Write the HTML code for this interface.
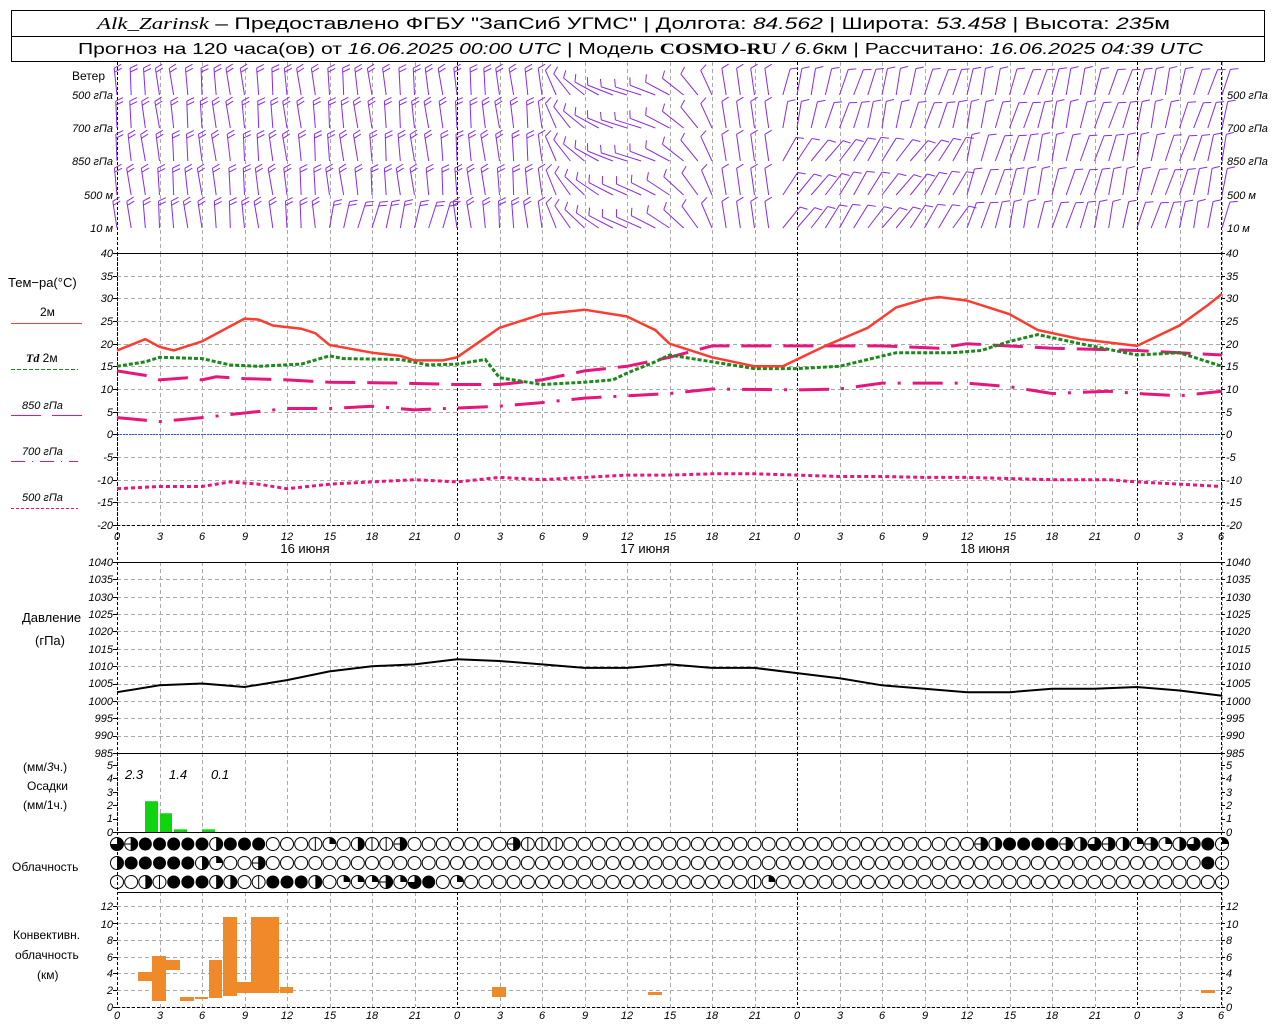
<!DOCTYPE html>
<html><head><meta charset="utf-8"><style>
html,body{margin:0;padding:0;background:#fff;width:1280px;height:1024px;overflow:hidden}
svg{display:block}
text{font-family:"Liberation Sans",sans-serif;fill:#000}
.it{font-style:italic;font-size:11px}
.l{font-size:12px}
</style></head><body>
<svg id="s" width="1280" height="1024" viewBox="0 0 1280 1024" xmlns="http://www.w3.org/2000/svg">
<rect x="11.5" y="10.5" width="1253" height="51" fill="none" stroke="#000"/>
<line x1="11" y1="36.5" x2="1265" y2="36.5" stroke="#000"/>
<text x="97" y="29" font-size="17" textLength="1073" lengthAdjust="spacingAndGlyphs"><tspan font-family="Liberation Serif" font-style="italic">Alk_Zarinsk</tspan> – Предоставлено ФГБУ "ЗапСиб УГМС" | Долгота: <tspan font-style="italic">84.562</tspan> | Широта: <tspan font-style="italic">53.458</tspan> | Высота: <tspan font-style="italic">235</tspan>м</text>
<text x="78" y="54" font-size="16" textLength="1125" lengthAdjust="spacingAndGlyphs">Прогноз на 120 часа(ов) от <tspan font-style="italic">16.06.2025 00:00 UTC</tspan>  | Модель <tspan font-family="Liberation Serif" font-weight="bold">COSMO-RU</tspan> <tspan font-style="italic">/ 6.6</tspan>км | Рассчитано: <tspan font-style="italic">16.06.2025 04:39 UTC</tspan></text>
<g id="grid"></g>
<g id="data"></g>
<text x="72" y="80" class="l">Ветер</text>
<text x="113" y="99" class="it" text-anchor="end">500 гПа</text>
<text x="113" y="132" class="it" text-anchor="end">700 гПа</text>
<text x="113" y="165" class="it" text-anchor="end">850 гПа</text>
<text x="113" y="199" class="it" text-anchor="end">500 м</text>
<text x="113" y="232" class="it" text-anchor="end">10  м</text>
<text x="1227" y="99" class="it">500 гПа</text>
<text x="1227" y="132" class="it">700 гПа</text>
<text x="1227" y="165" class="it">850 гПа</text>
<text x="1227" y="199" class="it">500 м</text>
<text x="1227" y="232" class="it">10  м</text>
<text x="8" y="287" font-size="13">Тем−ра(°C)</text>
<text x="40" y="316" class="l">2м</text>
<line x1="11" y1="323.5" x2="82" y2="323.5" stroke="#ff3b30"/>
<text x="26" y="362" class="l"><tspan font-family="Liberation Serif" font-style="italic" font-weight="bold">Td</tspan>  2м</text>
<line x1="11" y1="369.5" x2="78" y2="369.5" stroke="#1a8a1a" stroke-dasharray="4 2"/>
<text x="22" y="409" class="it">850 гПа</text>
<line x1="11" y1="415.5" x2="41" y2="415.5" stroke="#e8157d"/><line x1="52" y1="415.5" x2="82" y2="415.5" stroke="#e8157d"/>
<text x="22" y="455" class="it">700 гПа</text>
<line x1="11" y1="461.5" x2="78" y2="461.5" stroke="#e8157d" stroke-dasharray="14 7 1 7"/>
<text x="22" y="501" class="it">500 гПа</text>
<line x1="11" y1="508.5" x2="78" y2="508.5" stroke="#e8157d" stroke-dasharray="3 2"/>
<text x="22" y="622" font-size="13">Давление</text>
<text x="35" y="645" font-size="13">(гПа)</text>
<text x="23" y="771" class="l">(мм/<tspan font-style="italic">3</tspan>ч.)</text>
<text x="27" y="790" class="l">Осадки</text>
<text x="23" y="809" class="l">(мм/1ч.)</text>
<text x="125" y="779" font-size="13" font-style="italic">2.3</text>
<text x="169" y="779" font-size="13" font-style="italic">1.4</text>
<text x="211" y="779" font-size="13" font-style="italic">0.1</text>
<text x="12" y="871" class="l">Облачность</text>
<text x="13" y="939" class="l">Конвективн.</text>
<text x="15" y="959" class="l">облачность</text>
<text x="37" y="979" class="l">(км)</text>
<text x="305" y="553" font-size="13" text-anchor="middle">16 июня</text>
<text x="645" y="553" font-size="13" text-anchor="middle">17 июня</text>
<text x="985" y="553" font-size="13" text-anchor="middle">18 июня</text>
<g class="it" font-size="14">
<text x="117" y="540" text-anchor="middle">0</text><text x="160" y="540" text-anchor="middle">3</text><text x="202" y="540" text-anchor="middle">6</text><text x="245" y="540" text-anchor="middle">9</text><text x="287" y="540" text-anchor="middle">12</text><text x="330" y="540" text-anchor="middle">15</text><text x="372" y="540" text-anchor="middle">18</text><text x="415" y="540" text-anchor="middle">21</text><text x="457" y="540" text-anchor="middle">0</text><text x="500" y="540" text-anchor="middle">3</text><text x="542" y="540" text-anchor="middle">6</text><text x="585" y="540" text-anchor="middle">9</text><text x="627" y="540" text-anchor="middle">12</text><text x="670" y="540" text-anchor="middle">15</text><text x="712" y="540" text-anchor="middle">18</text><text x="755" y="540" text-anchor="middle">21</text><text x="797" y="540" text-anchor="middle">0</text><text x="840" y="540" text-anchor="middle">3</text><text x="882" y="540" text-anchor="middle">6</text><text x="925" y="540" text-anchor="middle">9</text><text x="967" y="540" text-anchor="middle">12</text><text x="1010" y="540" text-anchor="middle">15</text><text x="1052" y="540" text-anchor="middle">18</text><text x="1095" y="540" text-anchor="middle">21</text><text x="1137" y="540" text-anchor="middle">0</text><text x="1180" y="540" text-anchor="middle">3</text><text x="1221" y="540" text-anchor="middle">6</text>
</g>
<g class="it" font-size="14">
<text x="117" y="1019" text-anchor="middle">0</text><text x="160" y="1019" text-anchor="middle">3</text><text x="202" y="1019" text-anchor="middle">6</text><text x="245" y="1019" text-anchor="middle">9</text><text x="287" y="1019" text-anchor="middle">12</text><text x="330" y="1019" text-anchor="middle">15</text><text x="372" y="1019" text-anchor="middle">18</text><text x="415" y="1019" text-anchor="middle">21</text><text x="457" y="1019" text-anchor="middle">0</text><text x="500" y="1019" text-anchor="middle">3</text><text x="542" y="1019" text-anchor="middle">6</text><text x="585" y="1019" text-anchor="middle">9</text><text x="627" y="1019" text-anchor="middle">12</text><text x="670" y="1019" text-anchor="middle">15</text><text x="712" y="1019" text-anchor="middle">18</text><text x="755" y="1019" text-anchor="middle">21</text><text x="797" y="1019" text-anchor="middle">0</text><text x="840" y="1019" text-anchor="middle">3</text><text x="882" y="1019" text-anchor="middle">6</text><text x="925" y="1019" text-anchor="middle">9</text><text x="967" y="1019" text-anchor="middle">12</text><text x="1010" y="1019" text-anchor="middle">15</text><text x="1052" y="1019" text-anchor="middle">18</text><text x="1095" y="1019" text-anchor="middle">21</text><text x="1137" y="1019" text-anchor="middle">0</text><text x="1180" y="1019" text-anchor="middle">3</text><text x="1221" y="1019" text-anchor="middle">6</text>
</g>
<g class="it" font-size="9">
<text x="113" y="257" text-anchor="end">40</text><text x="113" y="280" text-anchor="end">35</text><text x="113" y="302" text-anchor="end">30</text><text x="113" y="325" text-anchor="end">25</text><text x="113" y="348" text-anchor="end">20</text><text x="113" y="370" text-anchor="end">15</text><text x="113" y="393" text-anchor="end">10</text><text x="113" y="416" text-anchor="end">5</text><text x="113" y="438" text-anchor="end">0</text><text x="113" y="461" text-anchor="end">-5</text><text x="113" y="484" text-anchor="end">-10</text><text x="113" y="506" text-anchor="end">-15</text><text x="113" y="529" text-anchor="end">-20</text>
<text x="1226" y="257">40</text><text x="1226" y="280">35</text><text x="1226" y="302">30</text><text x="1226" y="325">25</text><text x="1226" y="348">20</text><text x="1226" y="370">15</text><text x="1226" y="393">10</text><text x="1226" y="416">5</text><text x="1226" y="438">0</text><text x="1226" y="461">-5</text><text x="1226" y="484">-10</text><text x="1226" y="506">-15</text><text x="1226" y="529">-20</text>
<text x="113" y="566" text-anchor="end">1040</text><text x="113" y="583" text-anchor="end">1035</text><text x="113" y="601" text-anchor="end">1030</text><text x="113" y="618" text-anchor="end">1025</text><text x="113" y="635" text-anchor="end">1020</text><text x="113" y="653" text-anchor="end">1015</text><text x="113" y="670" text-anchor="end">1010</text><text x="113" y="687" text-anchor="end">1005</text><text x="113" y="705" text-anchor="end">1000</text><text x="113" y="722" text-anchor="end">995</text><text x="113" y="739" text-anchor="end">990</text><text x="113" y="757" text-anchor="end">985</text>
<text x="1226" y="566">1040</text><text x="1226" y="583">1035</text><text x="1226" y="601">1030</text><text x="1226" y="618">1025</text><text x="1226" y="635">1020</text><text x="1226" y="653">1015</text><text x="1226" y="670">1010</text><text x="1226" y="687">1005</text><text x="1226" y="705">1000</text><text x="1226" y="722">995</text><text x="1226" y="739">990</text><text x="1226" y="757">985</text>
<text x="113" y="769" text-anchor="end">5</text><text x="113" y="782" text-anchor="end">4</text><text x="113" y="796" text-anchor="end">3</text><text x="113" y="809" text-anchor="end">2</text><text x="113" y="822" text-anchor="end">1</text><text x="113" y="836" text-anchor="end">0</text>
<text x="1226" y="769">5</text><text x="1226" y="782">4</text><text x="1226" y="796">3</text><text x="1226" y="809">2</text><text x="1226" y="822">1</text><text x="1226" y="836">0</text>
<text x="113" y="910" text-anchor="end">12</text><text x="113" y="928" text-anchor="end">10</text><text x="113" y="944" text-anchor="end">8</text><text x="113" y="961" text-anchor="end">6</text><text x="113" y="977" text-anchor="end">4</text><text x="113" y="994" text-anchor="end">2</text><text x="113" y="1011" text-anchor="end">0</text>
<text x="1226" y="910">12</text><text x="1226" y="928">10</text><text x="1226" y="944">8</text><text x="1226" y="961">6</text><text x="1226" y="977">4</text><text x="1226" y="994">2</text><text x="1226" y="1011">0</text>
</g>
</svg>
<script>
(function(){
var NS="http://www.w3.org/2000/svg",G=document.getElementById('grid'),D=document.getElementById('data');
function el(p,t,a){var e=document.createElementNS(NS,t);for(var k in a)e.setAttribute(k,a[k]);p.appendChild(e);return e;}
function X(h){return 117+h*340/24;}
var L=117,R=1221;
[[62,253],[253,525],[562,753],[753,832],[892,1007]].forEach(function(p){
 for(var k=0;k<=26;k++){var h=k*3,x=Math.round(X(h))+.5;var day=(h%24==0);
  el(G,'line',{x1:x,y1:p[0],x2:x,y2:p[1],stroke:day?'#000':'#aaa','stroke-dasharray':day?'3 2':'4 3'});}
});
function hgrid(y0,y1,n){for(var i=0;i<=n;i++){var y=Math.round(y0+(y1-y0)*i/n)+.5;
 el(G,'line',{x1:L,y1:y,x2:R,y2:y,stroke:'#aaa','stroke-dasharray':'4 3'});
 el(G,'line',{x1:L-4,y1:y,x2:L,y2:y,stroke:'#000'});el(G,'line',{x1:R,y1:y,x2:R+4,y2:y,stroke:'#000'});}}
hgrid(253,525,12);hgrid(562,753,11);hgrid(1007,906,6);
for(var i=0;i<=5;i++){var y=Math.round(832-13.4*i)+.5;el(G,'line',{x1:L-4,y1:y,x2:L,y2:y,stroke:'#000'});el(G,'line',{x1:R,y1:y,x2:R+4,y2:y,stroke:'#000'});}
[253,562,753,832,892].forEach(function(y){el(G,'line',{x1:L,y1:y+.5,x2:R,y2:y+.5,stroke:'#000'});});
el(G,'line',{x1:L,y1:1007.5,x2:R,y2:1007.5,stroke:'#000','stroke-dasharray':'3 2'});
el(G,'line',{x1:L,y1:525.5,x2:R,y2:525.5,stroke:'#000','stroke-dasharray':'3 2'});
el(G,'line',{x1:L,y1:434.5,x2:R,y2:434.5,stroke:'#3050ff','stroke-dasharray':'2 1'});
[L+.5,R+.5].forEach(function(x){el(G,'line',{x1:x,y1:62,x2:x,y2:1007,stroke:'#000','stroke-dasharray':'3 2'});});
function curve(pts,fy,attrs){var d='';pts.forEach(function(p,i){d+=(i?'L':'M')+X(p[0]).toFixed(1)+' '+fy(p[1]).toFixed(1);});attrs.d=d;attrs.fill='none';el(D,'path',attrs);}
function TY(t){return 253+(40-t)*272/60;}
curve([[0,-12],[3,-11.5],[6,-11.5],[8,-10.5],[10,-11],[12,-12],[15,-11],[18,-10.5],[21,-10],[24,-10.5],[27,-9.5],[30,-10],[33,-9.5],[36,-9],[39,-9],[42,-8.7],[45,-8.7],[48,-9],[51,-9.3],[54,-9.3],[57,-9.5],[60,-9.5],[66,-10],[70,-10],[72,-10.5],[78,-11.5]],TY,{stroke:'#e8157d','stroke-width':3,'stroke-dasharray':'4 3'});
curve([[0,3.7],[3,2.8],[6,3.7],[9,4.7],[12,5.7],[15,5.7],[18,6.2],[21,5.4],[24,5.8],[27,6.2],[30,7],[33,8],[36,8.5],[39,9],[42,10],[48,9.8],[51,10],[54,11.3],[57,11.3],[60,11.3],[63,10.5],[66,9],[70,9.5],[72,9],[75,8.5],[78,9.5]],TY,{stroke:'#e8157d','stroke-width':3,'stroke-dasharray':'30 12 3 12'});
curve([[0,14],[2,13],[3,12],[5,12.5],[6,12],[7,12.7],[9,12.3],[12,12],[15,11.5],[20,11.3],[24,11],[27,11],[30,12],[33,14],[36,15],[39,17],[42,19.5],[48,19.5],[54,19.5],[58,19],[60,20],[66,19],[72,18.5],[78,17.5]],TY,{stroke:'#e8157d','stroke-width':3,'stroke-dasharray':'30 12'});
curve([[0,15],[2,16],[3,17],[6,16.7],[8,15.3],[10,15],[13,15.5],[15,17.3],[16,16.7],[20,16.5],[22,15.3],[24,15.5],[26,16.5],[27,12.5],[30,11],[33,11.5],[35,12],[36,13.5],[38,16],[39,17.5],[42,16],[45,14.5],[48,14.5],[51,15],[53,16.5],[55,18],[59,18],[61,18.5],[63,20.5],[65,22],[68,20],[72,17.5],[75,18],[78,15]],TY,{stroke:'#1a8a1a','stroke-width':3,'stroke-dasharray':'4 2'});
curve([[0,18.5],[2,21],[3,19.3],[4,18.5],[6,20.5],[9,25.5],[10,25.3],[11,24],[13,23.3],[14,22.3],[15,19.7],[18,18],[20,17.3],[21,16.3],[23,16.3],[24,17],[27,23.5],[30,26.5],[33,27.5],[36,26],[38,23],[39,20],[42,17],[45,15],[47,15],[50,19.5],[53,23.5],[55,28],[57,29.8],[58,30.3],[60,29.5],[63,26.5],[65,23],[68,21],[72,19.5],[75,24],[77,28.5],[78,31]],TY,{stroke:'#ff3b30','stroke-width':2.5});
function PY(p){return 562+(1040-p)*191/55;}
curve([[0,1002.5],[3,1004.5],[6,1005],[9,1004],[12,1006],[15,1008.5],[18,1010],[21,1010.5],[24,1012],[27,1011.5],[30,1010.5],[33,1009.5],[36,1009.5],[39,1010.5],[42,1009.5],[45,1009.5],[48,1008],[51,1006.5],[54,1004.5],[57,1003.5],[60,1002.5],[63,1002.5],[66,1003.5],[69,1003.5],[72,1004],[75,1003],[78,1001.5]],PY,{stroke:'#000','stroke-width':2});
[[145,158,2.3],[160,172,1.4],[174,187,0.2],[202,215,0.2]].forEach(function(b){var h=b[2]*13.4;el(D,'rect',{x:b[0],y:832-h,width:b[1]-b[0],height:h,fill:'#11d411'});});
[[138,152,972,981],[152,166,956,1001],[166,180,960,970],[180,194,997,1001],[195,208,997,999],[209,222,960,998],[223,237,917,996],[237,251,982,993],[251,279,917,993],[280,293,987,993],[492,506,987,997],[648,662,992,995],[1201,1215,990,993]].forEach(function(b){el(D,'rect',{x:b[0],y:b[2],width:b[1]-b[0],height:b[3]-b[2],fill:'#f0892a'});});
function row(str,y){for(var i=0;i<str.length;i++){var cx=X(i),c=str[i],r=6.5;
 var g=el(D,'g',{});
 if(c=='f'){el(g,'circle',{cx:cx,cy:y,r:r,fill:'#000'});continue;}
 if(c=='r'||c=='x'){el(g,'path',{d:'M'+cx+' '+(y-r)+'A'+r+' '+r+' 0 0 1 '+cx+' '+(y+r)+'Z',fill:'#000'});}
 if(c=='q'){el(g,'path',{d:'M'+cx+' '+y+'L'+cx+' '+(y-r)+'A'+r+' '+r+' 0 0 1 '+(cx+r)+' '+y+'Z',fill:'#000'});}
 if(c=='t'){el(g,'path',{d:'M'+cx+' '+y+'L'+cx+' '+(y-r)+'A'+r+' '+r+' 0 1 1 '+(cx-r)+' '+y+'Z',fill:'#000'});}
 el(g,'circle',{cx:cx,cy:y,r:r,fill:'none',stroke:'#000','stroke-width':1});
 if(c=='l'||c=='v'||c=='x'){el(g,'line',{x1:cx,y1:y-r,x2:cx,y2:y+r,stroke:'#000'});}
 if(c=='x'){el(g,'line',{x1:cx-r,y1:y,x2:cx,y2:y,stroke:'#000'});}
}}
function pad(s,n){while(s.length<n)s+='o';return s;}
var r1='txfffffrfffooovqorvvxoooooooxvvv';r1=pad(r1,61);r1+='xrffffxrtxrqxqrtfq';
var r2=pad('rfffffrqoox',77)+'fo';
var r3=pad('oorlfffrrolfffroqqqxqtfoq',45)+'lq';r3=pad(r3,79);
row(r1,844);row(r2,863);row(r3,882);
var lev=[95,128,161,195,228];
function ang(h,l){
 if(h<30){return -6+Math.sin(h*1.3+l)*4 + (l==4&&h>14&&h<24?20:0);}
 if(h<47){var t=(h-30)/17;return -8-65*Math.sin(Math.PI*Math.min(1,t*1.3))*(l<3?1:0.9);}
 return 15+Math.sin(h+l)*6+(l>=2&&h<60?20:0);
}
for(var l=0;l<5;l++){for(var h=0;h<=78;h++){
 var a=ang(h,l)*Math.PI/180,len=27,bx=X(h),by=lev[l];
 var tx=bx+Math.sin(a)*len,ty=by-Math.cos(a)*len;
 var g=el(D,'g',{stroke:'#8a2be2','stroke-width':1,fill:'none'});
 el(g,'line',{x1:bx,y1:by,x2:tx,y2:ty});
 var nb=(h<30)?2:1;
 for(var k=0;k<nb;k++){var px=bx+Math.sin(a)*(len-k*4),py=by-Math.cos(a)*(len-k*4);
  var ba=a+Math.PI/2-0.4;el(g,'line',{x1:px,y1:py,x2:px+Math.sin(ba)*8,y2:py-Math.cos(ba)*8});}
}}
})();
</script>
</body></html>
